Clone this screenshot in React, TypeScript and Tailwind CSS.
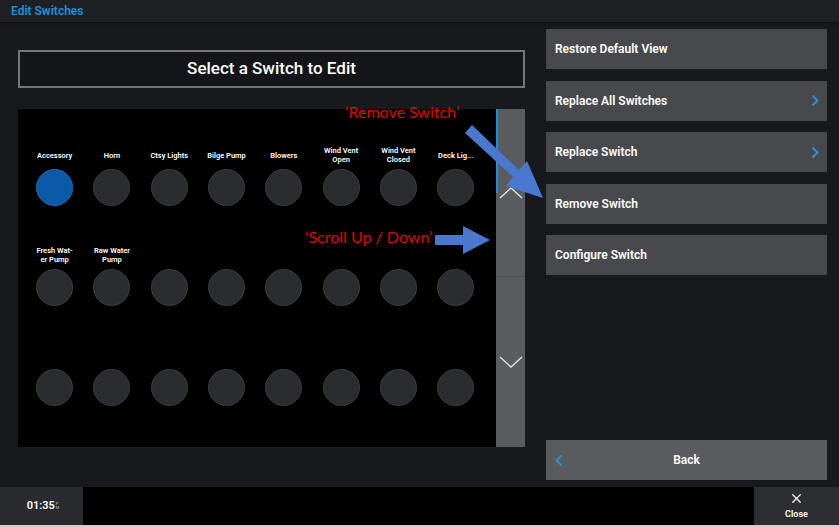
import { X } from "lucide-react";

const LABELS: string[][] = [
  ["Accessory"],
  ["Horn"],
  ["Ctsy Lights"],
  ["Bilge Pump"],
  ["Blowers"],
  ["Wind Vent", "Open"],
  ["Wind Vent", "Closed"],
  ["Deck Lig..."],
  ["Fresh Wat-", "er Pump"],
  ["Raw Water", "Pump"],
];

const MENU = [
  { label: "Restore Default View", more: false },
  { label: "Replace All Switches", more: true },
  { label: "Replace Switch", more: true },
  { label: "Remove Switch", more: false },
  { label: "Configure Switch", more: false },
];

const NOTE = "absolute text-[16px] leading-[20px] text-[#e00000] font-['Lato','Liberation_Sans',sans-serif]";

function Chevron({ dir, className }: { dir: "left" | "right"; className?: string }) {
  return (
    <svg width="8" height="13" viewBox="0 0 8 13" className={className}>
      <path
        d={dir === "right" ? "M1.5 1.5 L6.5 6.5 L1.5 11.5" : "M6.5 1.5 L1.5 6.5 L6.5 11.5"}
        fill="none"
        stroke="#2f8fd0"
        strokeWidth="2"
      />
    </svg>
  );
}

function SwitchCell({ index }: { index: number }) {
  const label = LABELS[index] ?? [];
  const active = index === 0;
  return (
    <div className="flex flex-col items-center">
      <div className="h-[18px] flex flex-col items-center justify-center text-[7.5px] leading-[9px] font-semibold text-white text-center">
        {label.map((l) => (
          <span key={l}>{l}</span>
        ))}
      </div>
      <div
        className={
          active
            ? "mt-[5px] w-[37px] h-[37px] rounded-full bg-[#0b5aa8] border border-[#1d6cb8]"
            : "mt-[5px] w-[37px] h-[37px] rounded-full bg-[#2b2c30] border border-[#3c3d41]"
        }
      />
    </div>
  );
}

export default function App() {
  return (
    <div
      className="relative w-[839px] h-[527px] bg-[#18191c] flex flex-col overflow-hidden"
      style={{ fontFamily: "Roboto, 'Liberation Sans', sans-serif" }}
    >
      {/* Header */}
      <div className="h-[22px] bg-[#1f2023] flex items-center px-[11px] shadow-[0_1px_2px_rgba(0,0,0,0.6)]">
        <span className="text-[12px] font-semibold text-[#1e90d6]">Edit Switches</span>
      </div>

      {/* Body */}
      <div className="flex-1 flex">
        {/* Left side */}
        <div className="w-[546px] pl-[18px] pr-[21px] pt-[28px]">
          <div className="h-[38px] border-2 border-[#75767a] bg-[#141518] flex items-center justify-center">
            <span className="text-[17px] font-medium text-white">Select a Switch to Edit</span>
          </div>

          <div className="mt-[21px] h-[338px] bg-black flex">
            <div className="flex-1 pl-[8px] pt-[37px] grid grid-cols-[repeat(8,57.3px)] auto-rows-[60px] gap-y-[40px]">
              {Array.from({ length: 24 }).map((_, i) => (
                <SwitchCell key={i} index={i} />
              ))}
            </div>

            {/* Scroll bar */}
            <div className="w-[29px] bg-[#5b5c60] flex flex-col">
              <div className="h-[168px] relative flex flex-col items-center justify-end border-b border-[#505155]">
                <div className="absolute left-0 top-0 w-[2px] h-[84px] bg-[#1e90d6]" />
                <svg width="24" height="12" viewBox="0 0 24 12" className="mb-[77px]">
                  <path d="M1 11 L12 1 L23 11" fill="none" stroke="#e6e6e6" strokeWidth="1.3" />
                </svg>
              </div>
              <div className="flex-1 flex items-center justify-center">
                <svg width="24" height="12" viewBox="0 0 24 12">
                  <path d="M1 1 L12 11 L23 1" fill="none" stroke="#e6e6e6" strokeWidth="1.3" />
                </svg>
              </div>
            </div>
          </div>
        </div>

        {/* Right menu */}
        <div className="w-[281px] pt-[7px] pb-[7px] flex flex-col">
          <div className="flex flex-col gap-[11.5px]">
            {MENU.map((m) => (
              <div
                key={m.label}
                className="h-[40px] bg-[#48494d] flex items-center justify-between pl-[9px] pr-[8px]"
              >
                <span className="text-[12px] font-semibold text-white">{m.label}</span>
                {m.more && <Chevron dir="right" />}
              </div>
            ))}
          </div>
          <div className="mt-auto h-[40px] bg-[#5a5b5f] flex items-center relative">
            <Chevron dir="left" className="absolute left-[9px]" />
            <span className="flex-1 text-center text-[12px] font-semibold text-white">Back</span>
          </div>
        </div>
      </div>

      {/* Bottom bar */}
      <div className="h-[40px] bg-black flex border-b-2 border-[#cfcfcf]">
        <div className="w-[83px] bg-[#2a2b2f] flex items-center justify-center pl-[3px]">
          <span className="text-[11px] font-semibold text-white">01:35</span>
          <span className="flex flex-col text-[4px] leading-[4px] text-[#bbb] ml-[1px]">
            <span>P</span>
            <span>M</span>
          </span>
        </div>
        <div className="flex-1" />
        <div className="w-[85px] bg-[#2d2e32] flex flex-col items-center justify-center">
          <X size={15} strokeWidth={2} className="text-white" />
          <span className="text-[9px] font-semibold text-white mt-[2px]">Close</span>
        </div>
      </div>

      {/* Annotations */}
      <span className={`${NOTE} left-[345px] top-[102px]`}>‘Remove Switch’</span>
      <span className={`${NOTE} left-[305px] top-[227px]`}>‘Scroll Up / Down’</span>
      <svg className="absolute left-0 top-0 pointer-events-none" width="839" height="527">
        <polygon
          points="465,133 472,125 519,170 527,161 543,198 506,186 513,177"
          fill="#4a78cf"
        />
        <polygon
          points="435,235 463,235 463,226 490,240 463,254 463,245 435,245"
          fill="#4a78cf"
        />
      </svg>
    </div>
  );
}
